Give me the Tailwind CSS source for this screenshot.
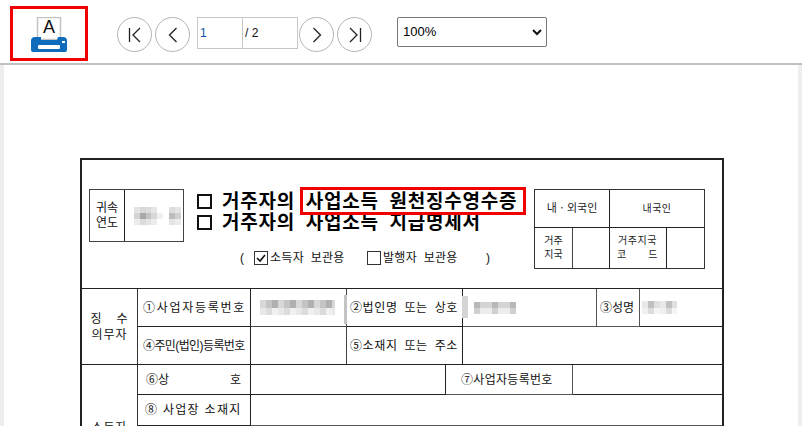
<!doctype html>
<html>
<head>
  <meta charset="UTF-8">
  <meta name="viewport" content="width=device-width, initial-scale=1.0">
  <script src="https://cdn.jsdelivr.net/npm/@tailwindcss/browser@4"></script>
</head>
<body class="w-[802px] h-[426px] overflow-hidden bg-white font-['Liberation_Sans','Noto_Sans_CJK_KR',sans-serif] text-black">
  <!-- Toolbar -->
  <header class="h-[65px] border-b-[2px] border-[#c0c0c0] flex items-start relative">
    <!-- Print button -->
    <button class="ml-[10px] mt-[6px] w-[78px] h-[55px] border-[3px] border-[#f00000] flex items-center justify-center">
      <svg class="mt-[2px]" width="36" height="36" viewBox="0 0 36 36">
        <rect x="6.5" y="0.5" width="23" height="22" fill="#fff" stroke="#c4c4c4" stroke-width="1.5"/>
        <text x="18" y="16" text-anchor="middle" font-size="18" font-family="Liberation Sans" fill="#111">A</text>
        <path d="M4 20h6v3h16l1-3h5a4 4 0 0 1 4 4v9a2 2 0 0 1-2 2H2a2 2 0 0 1-2-2v-9a4 4 0 0 1 4-4z" fill="#0f6cbd"/>
        <rect x="7" y="28" width="22" height="4" rx="1" fill="#fff"/>
        <rect x="31" y="24" width="3" height="2" fill="#fff"/>
      </svg>
    </button>

    <nav class="ml-[29px] mt-[17px] flex items-start">
      <button class="w-[35px] h-[35px] rounded-full border border-[#b4b4b4] flex items-center justify-center">
        <svg width="16" height="16" viewBox="0 0 16 16" fill="none" stroke="#222" stroke-width="1.3"><path d="M2.5 1v14M13 1 6 8l7 7"/></svg>
      </button>
      <button class="ml-[3px] w-[35px] h-[35px] rounded-full border border-[#b4b4b4] flex items-center justify-center">
        <svg width="16" height="16" viewBox="0 0 16 16" fill="none" stroke="#222" stroke-width="1.3"><path d="M11.5 1 4.5 8l7 7"/></svg>
      </button>
      <div class="ml-[7px] w-[101px] h-[32px] border border-[#c8c8c8] flex text-[12px] leading-[30px]">
        <span class="w-[45px] border-r border-[#c8c8c8] pl-[2px] text-[#0b4f9e]">1</span>
        <span class="pl-[2px] text-[#111]">/ 2</span>
      </div>
      <button class="ml-[1px] w-[35px] h-[35px] rounded-full border border-[#b4b4b4] flex items-center justify-center">
        <svg width="16" height="16" viewBox="0 0 16 16" fill="none" stroke="#222" stroke-width="1.3"><path d="M4.5 1l7 7-7 7"/></svg>
      </button>
      <button class="ml-[3px] w-[35px] h-[35px] rounded-full border border-[#b4b4b4] flex items-center justify-center">
        <svg width="16" height="16" viewBox="0 0 16 16" fill="none" stroke="#222" stroke-width="1.3"><path d="M3 1l7 7-7 7M13.5 1v14"/></svg>
      </button>
    </nav>

    <div class="ml-[25px] mt-[17px] w-[150px] h-[30px] border border-[#767676] rounded-[2px] flex items-center justify-between pl-[5px] pr-[4px] text-[13px]">
      <span>100%</span>
      <svg width="10" height="7" viewBox="0 0 10 7" fill="none" stroke="#111" stroke-width="2"><path d="M1 1l4 4 4-4"/></svg>
    </div>
  </header>

  <!-- Viewer -->
  <main class="h-[361px] overflow-hidden mx-[4px] relative">
    <div class="ml-[76px] mt-[93px] w-[644px] border-[2px] border-b-0 border-[#222]">
      <!-- Title block -->
      <section class="h-[129px] border-b border-[#222] relative flex items-start pl-[7px] pt-[29px]">
        <div class="w-[95px] h-[53px] border border-[#444] flex text-[12px] text-[#111]">
          <div class="w-[35px] border-r border-[#222] flex items-center justify-center text-center leading-[15px]">귀속<br>연도</div>
          <div class="flex-1 flex items-center pl-[9px] gap-[6px]">
            <div class="w-[29px] h-[18px] grid grid-cols-5 grid-rows-3">
              <i class="bg-[#e4e4e4]"></i><i class="bg-[#d8d8d8]"></i><i class="bg-[#dcdcdc]"></i><i class="bg-[#e6e6e6]"></i><i></i>
              <i class="bg-[#d4d4d4]"></i><i class="bg-[#a8a8a8]"></i><i class="bg-[#c4c4c4]"></i><i class="bg-[#d8d8d8]"></i><i class="bg-[#f0f0f0]"></i>
              <i class="bg-[#ececec]"></i><i class="bg-[#dcdcdc]"></i><i class="bg-[#e4e4e4]"></i><i class="bg-[#ececec]"></i><i></i>
            </div>
            <div class="w-[12px] h-[18px] grid grid-cols-2 grid-rows-3">
              <i class="bg-[#dcdcdc]"></i><i class="bg-[#e4e4e4]"></i>
              <i class="bg-[#bcbcbc]"></i><i class="bg-[#d0d0d0]"></i>
              <i class="bg-[#e4e4e4]"></i><i class="bg-[#ececec]"></i>
            </div>
          </div>
        </div>

        <div class="ml-[13px] w-[336px] shrink-0">
          <div class="mt-[-2px] pt-[4px] text-[19px] font-bold leading-[21px] tracking-[0.8px] [word-spacing:4.5px] whitespace-nowrap">
            <div class="flex items-center gap-[10px] h-[21px]"><span class="w-[15px] h-[15px] border-[2px] border-[#111]"></span><span>거주자의 사업소득 원천징수영수증</span></div>
            <div class="flex items-center gap-[10px] h-[21px]"><span class="w-[15px] h-[15px] border-[2px] border-[#111]"></span><span>거주자의 사업소득 지급명세서</span></div>
          </div>
          <div class="mt-[16px] ml-[43px] flex items-center text-[12px] h-[18px] text-[#111]">
            <span class="w-[14px]">(</span>
            <span class="w-[14px] h-[14px] border border-[#333] flex items-center justify-center">
              <svg width="10" height="9" viewBox="0 0 10 9" fill="none" stroke="#111" stroke-width="1.6"><path d="M1 4l3 3 5-6"/></svg>
            </span>
            <span class="ml-[2px] w-[97px] tracking-[0.3px] [word-spacing:3px]">소득자 보관용</span>
            <span class="w-[14px] h-[14px] border border-[#333]"></span>
            <span class="ml-[2px] w-[103px] tracking-[0.3px] [word-spacing:3px]">발행자 보관용</span>
            <span>)</span>
          </div>
        </div>

        <div class="absolute left-[452px] top-[29px] w-[171px] h-[80px] border border-[#333] text-[10px] text-[#222] grid grid-cols-[38px_37px_57px_1fr] grid-rows-[38px_1fr]">
          <div class="col-span-2 border-r border-b border-[#222] flex items-center justify-center text-[11px]">내ㆍ외국인</div>
          <div class="col-span-2 border-b border-[#222] flex items-center justify-center tracking-[0.5px]">내국인</div>
          <div class="border-r border-[#444] flex items-center justify-center text-center leading-[14px]">거주<br>지국</div>
          <div class="border-r border-[#222]"></div>
          <div class="border-r border-[#222] flex items-center text-center leading-[14px] pl-[7px] tracking-[0.5px]"><div>거주지국<br><span class="flex justify-between w-[41px]"><span>코</span><span>드</span></span></div></div>
          <div></div>
        </div>
      </section>

      <!-- Payer rows -->
      <section class="grid grid-cols-[56px_113px_96px_116px_134px_43px_1fr] grid-rows-[38px_37px] border-b border-[#222] text-[12px] text-[#111]">
        <div class="row-span-2 border-r border-[#333] flex items-center justify-center text-center leading-[16px] tracking-[1px]"><div><span class="flex justify-between w-[38px]"><span>징</span><span>수</span></span>의무자</div></div>
        <div class="border-r border-b border-[#222] flex items-center pl-[5px] tracking-[1.7px] whitespace-nowrap">①사업자등록번호</div>
        <div class="border-r border-b border-[#444] flex items-center pl-[9px]">
          <div class="w-[75px] h-[15px] flex flex-col">
            <i class="flex-1 bg-[repeating-linear-gradient(90deg,#d8d8d8_0,#d8d8d8_6px,#c4c4c4_6px,#c4c4c4_12px,#b0b0b0_12px,#b0b0b0_18px)]"></i>
            <i class="flex-1 bg-[repeating-linear-gradient(90deg,#e8e8e8_0,#e8e8e8_6px,#dcdcdc_6px,#dcdcdc_12px,#f0f0f0_12px,#f0f0f0_18px)]"></i>
          </div>
        </div>
        <div class="border-r border-b border-[#222] flex items-center pl-[3px] tracking-[0.6px] [word-spacing:3px] whitespace-nowrap">②법인명 또는 상호</div>
        <div class="border-r border-b border-[#555] flex items-center pl-[11px]">
          <div class="w-[42px] h-[12px] flex flex-col">
            <i class="flex-1 bg-[repeating-linear-gradient(90deg,#b8b8b8_0,#b8b8b8_6px,#d4d4d4_6px,#d4d4d4_18px)]"></i>
            <i class="flex-1 bg-[repeating-linear-gradient(90deg,#d0d0d0_0,#d0d0d0_6px,#ececec_6px,#ececec_18px)]"></i>
          </div>
        </div>
        <div class="border-r border-b border-[#555] flex items-center pl-[3px]">③성명</div>
        <div class="border-b border-[#222] flex items-center pl-[2px]">
          <div class="w-[35px] h-[13px] flex flex-col">
            <i class="flex-1 bg-[repeating-linear-gradient(90deg,#e8e8e8_0,#e8e8e8_6px,#c0c0c0_6px,#c0c0c0_12px,#e0e0e0_12px,#e0e0e0_18px)]"></i>
            <i class="flex-1 bg-[repeating-linear-gradient(90deg,#f0f0f0_0,#f0f0f0_6px,#dcdcdc_6px,#dcdcdc_12px,#f4f4f4_12px,#f4f4f4_18px)]"></i>
          </div>
        </div>
        <div class="border-r border-[#222] flex items-center pl-[5px] whitespace-nowrap tracking-[-0.6px]">④주민(법인)등록번호</div>
        <div class="border-r border-[#444]"></div>
        <div class="border-r border-[#222] flex items-center pl-[3px] tracking-[0.6px] [word-spacing:3px] whitespace-nowrap">⑤소재지 또는 주소</div>
        <div class="col-span-3"></div>
      </section>

      <!-- Payee rows -->
      <section class="grid grid-cols-[56px_113px_195px_127px_1fr] grid-rows-[30px_31px_40px] text-[12px] text-[#111]">
        <div class="row-span-3 border-r border-[#333] flex justify-center pt-[54px] tracking-[1px]">소득자</div>
        <div class="border-r border-b border-[#222] flex items-center justify-between pl-[8px] pr-[9px]"><span>⑥상</span><span>호</span></div>
        <div class="border-r border-b border-[#222]"></div>
        <div class="border-r border-b border-[#555] flex items-center pl-[15px] tracking-[0.3px]">⑦사업자등록번호</div>
        <div class="border-b border-[#222]"></div>
        <div class="border-r border-b border-[#222] flex items-center pl-[7px] tracking-[1.3px] whitespace-nowrap">⑧ 사업장 소재지</div>
        <div class="col-span-3 border-b border-[#555]"></div>
        <div class="border-r border-[#222]"></div>
        <div class="border-r border-[#222]"></div>
        <div class="border-r border-[#555]"></div>
        <div></div>
      </section>
    </div>

    <!-- Highlight on the title -->
    <div class="absolute left-[296px] top-[122px] w-[226px] h-[28px] border-[3px] border-[#f00000]"></div>
    <!-- Leftover redaction marks on the cell lines -->
    <div class="absolute left-[340px] top-[230px] w-[3px] h-[29px] bg-[#c4c4c4]"></div>
    <div class="absolute left-[458px] top-[231px] w-[6px] h-[22px] bg-[#d4d4d4]"></div>
  </main>

  <!-- Side gutters of the viewer -->
  <div class="fixed left-0 top-[65px] w-[4px] h-[361px] bg-[#eeeeee]"></div>
  <div class="fixed right-0 top-[65px] w-[4px] h-[361px] bg-[#eeeeee]"></div>
</body>
</html>
